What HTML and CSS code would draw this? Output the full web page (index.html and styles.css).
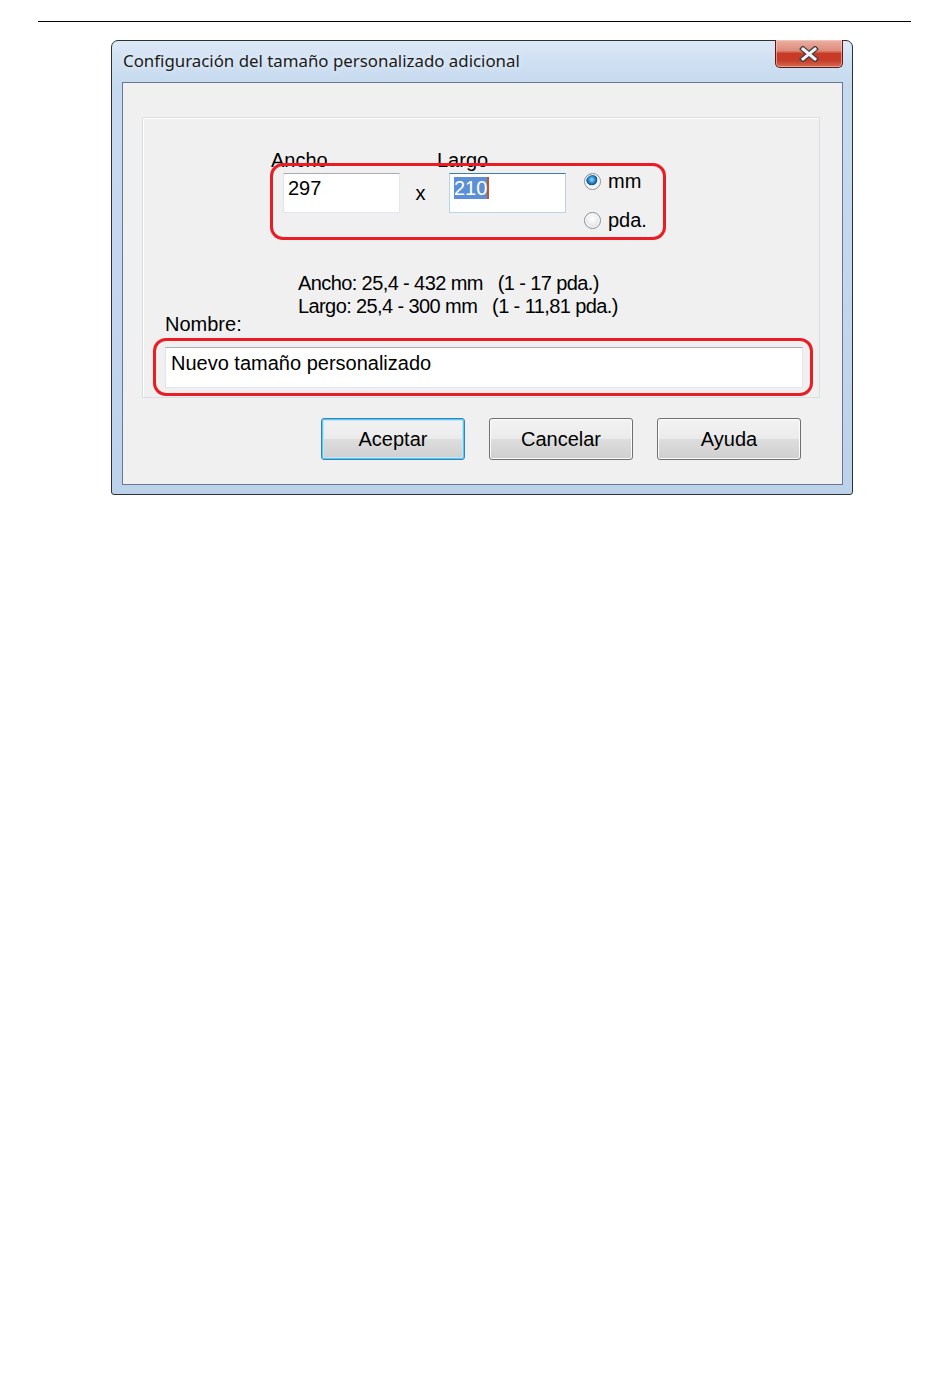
FILE: index.html
```html
<!DOCTYPE html>
<html lang="es">
<head>
<meta charset="utf-8">
<title>Configuración del tamaño personalizado adicional</title>
<link rel="stylesheet" href="styles.css">
</head>
<body>
<div class="rule"></div>
<div class="window">
  <div class="titlebar">
    <span class="title">Configuración del tamaño personalizado adicional</span>
    <div class="close">
      <svg width="22" height="16" viewBox="0 0 22 16">
        <path d="M5 3 L17 13 M17 3 L5 13" stroke="#3c3c44" stroke-width="5.5" stroke-linecap="square" fill="none"/>
        <path d="M5 3 L17 13 M17 3 L5 13" stroke="#f4f4f6" stroke-width="3" stroke-linecap="square" fill="none"/>
      </svg>
    </div>
  </div>
  <div class="client">
    <div class="panel">
      <div class="dims">
        <div class="field">
          <span class="label">Ancho</span>
          <div class="input">297</div>
        </div>
        <span class="times">x</span>
        <div class="field">
          <span class="label">Largo</span>
          <div class="input focus"><span class="sel">210</span><span class="caret"></span></div>
        </div>
        <div class="units">
          <div class="radio-row"><span class="radio on"></span><span>mm</span></div>
          <div class="radio-row"><span class="radio"></span><span>pda.</span></div>
        </div>
      </div>
      <div class="ranges">
        <div class="range-line">Ancho: 25,4 - 432 mm   (1 - 17 pda.)</div>
        <div class="range-line">Largo: 25,4 - 300 mm   (1 - 11,81 pda.)</div>
      </div>
      <div class="name-label">Nombre:</div>
      <div class="input name">Nuevo tamaño personalizado</div>
      <div class="mark mark-dims"></div>
      <div class="mark mark-name"></div>
    </div>
    <div class="buttons">
      <div class="btn default">Aceptar</div>
      <div class="btn">Cancelar</div>
      <div class="btn">Ayuda</div>
    </div>
  </div>
</div>
</body>
</html>
```
FILE: styles.css
```css
html, body {
  margin: 0;
  padding: 0;
  background: #ffffff;
}
body {
  font-family: "Liberation Sans", Arial, sans-serif;
  font-size: 20px;
  color: #000;
}
.rule {
  height: 1px;
  background: #000;
  margin: 21px 39px 0 38px;
}
.window {
  box-sizing: border-box;
  width: 742px;
  height: 455px;
  margin: 18px 0 0 111px;
  border: 1px solid #2e3033;
  border-radius: 7px 7px 3px 3px;
  padding: 0 9px 9px 10px;
  background: linear-gradient(to bottom, #dde9f6 0px, #cfe0f2 20px, #c6daef 42px, #c2d7ee 60%, #bcd2ea 100%);
}
.titlebar {
  height: 41px;
  display: flex;
  justify-content: space-between;
  align-items: flex-start;
}
.title {
  font-family: "Noto Sans", "Open Sans", sans-serif;
  font-size: 16.85px;
  line-height: 20px;
  margin: 10px 0 0 1px;
  color: #1a1a1a;
  text-shadow: 0 0 6px rgba(255,255,255,0.9);
}
.close {
  box-sizing: border-box;
  width: 68px;
  height: 28px;
  margin-top: -1px;
  border: 1px solid #5a1d16;
  border-top: none;
  border-radius: 0 0 5px 5px;
  background: linear-gradient(to bottom, #eab0a4 0%, #dd8a7a 40%, #c73a26 50%, #c73c28 75%, #d46a52 100%);
  box-shadow: inset 0 0 0 1px rgba(255, 210, 200, 0.55);
  display: flex;
  align-items: center;
  justify-content: center;
}
.client {
  box-sizing: border-box;
  width: 721px;
  height: 403px;
  border: 1px solid #68788e;
  background: #f0f0f0;
  padding: 34px 0 0 19px;
}
.panel {
  position: relative;
  box-sizing: border-box;
  width: 678px;
  height: 281px;
  border: 1px solid #d8dfe3;
  box-shadow: inset 1px 1px 0 #ffffff;
  padding-top: 31px;
}
.dims {
  display: flex;
  align-items: flex-start;
  padding-left: 128px;
}
.field {
  display: flex;
  flex-direction: column;
  width: 129px;
}
.label {
  line-height: 22px;
  height: 22px;
}
.input {
  box-sizing: border-box;
  background: #fff;
  border: 1px solid #e2e8ee;
  border-top-color: #abadb3;
  border-left-color: #e2e3ea;
  line-height: 22px;
  white-space: nowrap;
}
.field .input {
  width: 117px;
  height: 40px;
  margin: 2px 0 0 12px;
  padding: 3px 0 0 4px;
}
.input.focus {
  border-color: #b5d5ed;
  border-top-color: #3d7bad;
}
.sel {
  background: #5b8fd7;
  color: #fff;
}
.caret {
  display: inline-block;
  width: 2px;
  height: 22px;
  vertical-align: top;
  background: #c2532e;
}
.times {
  width: 37px;
  box-sizing: border-box;
  padding-left: 4px;
  text-align: center;
  margin-top: 24px;
  line-height: 40px;
}
.units {
  margin: 13px 0 0 18px;
  display: flex;
  flex-direction: column;
}
.radio-row {
  height: 39px;
  display: flex;
  align-items: center;
}
.radio {
  box-sizing: border-box;
  width: 17px;
  height: 17px;
  border-radius: 50%;
  margin-right: 7px;
  border: 1px solid #8a8e94;
  background: radial-gradient(circle at 50% 40%, #ffffff 0, #eceef0 45%, #c9ccd1 100%);
  box-shadow: inset 0 0 0 1px #ffffff;
}
.radio.on {
  background: radial-gradient(circle at 45% 38%, #9fe0ff 0, #2a8fd6 25%, #0b4f86 42%, #e8eaec 47%, #f7f7f7 60%, #c7cacf 100%);
}
.ranges {
  margin: 32px 0 0 155px;
}
.range-line {
  line-height: 23px;
  height: 23px;
  white-space: pre;
  letter-spacing: -0.6px;
}
.name-label {
  margin: -5px 0 0 22px;
  line-height: 23px;
}
.input.name {
  width: 638px;
  height: 41px;
  margin: 11px 0 0 22px;
  padding: 4px 0 0 5px;
}
.mark {
  position: absolute;
  box-sizing: border-box;
  border: 3px solid #ec1c24;
  border-radius: 13px;
}
.mark-dims {
  left: 127px;
  top: 45px;
  width: 396px;
  height: 77px;
}
.mark-name {
  left: 10px;
  top: 220px;
  width: 660px;
  height: 58px;
}
.buttons {
  display: flex;
  justify-content: flex-end;
  gap: 24px;
  margin-top: 20px;
  padding-right: 41px;
}
.btn {
  box-sizing: border-box;
  width: 144px;
  height: 42px;
  border: 1px solid #707070;
  border-radius: 3px;
  background: linear-gradient(to bottom, #f2f2f2 0%, #ebebeb 50%, #dddddd 51%, #cfcfcf 100%);
  box-shadow: inset 0 0 0 1px #fcfcfc;
  display: flex;
  align-items: center;
  justify-content: center;
  line-height: 22px;
}
.btn.default {
  border-color: #3c7fb1;
  box-shadow: inset 0 0 0 1px #48d0f8, inset 0 0 0 2px #c4e5f6;
}
```
